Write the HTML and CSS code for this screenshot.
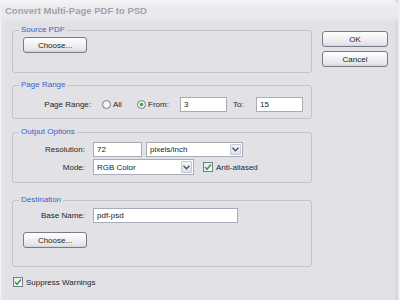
FILE: index.html
```html
<!DOCTYPE html>
<html>
<head>
<meta charset="utf-8">
<link rel="stylesheet" href="styles.css">
</head>
<body>
<div class="window">
  <div class="titlebar">Convert Multi-Page PDF to PSD</div>
  <div class="client">
    <div class="main">
      <fieldset class="group g-source">
        <legend>Source PDF</legend>
        <div class="btn choose">Choose...</div>
      </fieldset>

      <fieldset class="group g-range">
        <legend>Page Range</legend>
        <div class="row">
          <span class="lbl lbl-range">Page Range:</span>
          <span class="radio r-all"></span><span class="opt opt-all">All</span>
          <span class="radio on r-from"></span><span class="opt opt-from">From:</span>
          <span class="field f-num">3</span>
          <span class="opt opt-to">To:</span>
          <span class="field f-num">15</span>
        </div>
      </fieldset>

      <fieldset class="group g-output">
        <legend>Output Options</legend>
        <div class="row">
          <span class="lbl">Resolution:</span>
          <span class="field f-res">72</span>
          <span class="select s-units"><span class="sel-text">pixels/inch</span><span class="arrow"><svg width="7" height="5" viewBox="0 0 7 5"><path d="M0.5 0.8 L3.5 3.8 L6.5 0.8" fill="none" stroke="#4d5566" stroke-width="1.4"/></svg></span></span>
        </div>
        <div class="row row2">
          <span class="lbl">Mode:</span>
          <span class="select s-mode"><span class="sel-text">RGB Color</span><span class="arrow"><svg width="7" height="5" viewBox="0 0 7 5"><path d="M0.5 0.8 L3.5 3.8 L6.5 0.8" fill="none" stroke="#4d5566" stroke-width="1.4"/></svg></span></span>
          <span class="check c-anti"><svg width="8" height="8" viewBox="0 0 8 8"><path d="M1 4 L3 6.2 L7 1.5" fill="none" stroke="#2ea52e" stroke-width="1.6"/></svg></span>
          <span class="opt">Anti-aliased</span>
        </div>
      </fieldset>

      <fieldset class="group g-dest">
        <legend>Destination</legend>
        <div class="row">
          <span class="lbl">Base Name:</span>
          <span class="field f-name">pdf-psd</span>
        </div>
        <div class="btn choose choose2">Choose...</div>
      </fieldset>

      <div class="suppress">
        <span class="check"><svg width="8" height="8" viewBox="0 0 8 8"><path d="M1 4 L3 6.2 L7 1.5" fill="none" stroke="#2ea52e" stroke-width="1.6"/></svg></span>
        <span class="opt">Suppress Warnings</span>
      </div>
    </div>
    <div class="side">
      <div class="btn side-btn">OK</div>
      <div class="btn side-btn cancel">Cancel</div>
    </div>
  </div>
</div>
</body>
</html>
```
FILE: styles.css
```css
* { box-sizing: border-box; }
html, body { margin: 0; padding: 0; }
body {
  width: 400px;
  height: 300px;
  overflow: hidden;
  font-family: "Liberation Sans", Arial, sans-serif;
  font-size: 8px;
  color: #262626;
  background: #e0e0e5;
}
.window {
  width: 400px;
  height: 300px;
  background: #e1e1e6;
  border-left: 1px solid #f2f2f5;
  border-right: 2px solid #f0f0f3;
  box-shadow: inset 3px 0 0 #e6e6ea, inset -3px 0 0 #d8d8de;
}
.titlebar {
  height: 21px;
  line-height: 22px;
  padding-left: 4px;
  font-size: 9.5px;
  font-weight: bold;
  color: #a2a2aa;
  background: linear-gradient(#f4f4f7, #ebebef 40%, #e8e8ec);
  border-top-right-radius: 6px;
  border-bottom: 1px solid #e4e4e8;
}
.client {
  display: flex;
  padding-left: 11px;
}
.main {
  width: 300px;
}
.group {
  margin: 0;
  padding: 0;
  border: 1px solid #c3c3ca;
  border-radius: 3px;
  min-width: 0;
  width: 300px;
}
.group legend {
  margin-left: 6px;
  padding: 0 2px;
  font-size: 8px;
  line-height: 10px;
  color: #3b5fbf;
}
.g-source { margin-top: 4px; padding-bottom: 19px; }
.g-range { margin-top: 7px; padding-bottom: 6px; }
.g-output { margin-top: 8px; padding-bottom: 7px; }
.g-dest { margin-top: 12px; padding-bottom: 18px; }

.btn {
  height: 16px;
  border: 1px solid #7a7a8b;
  border-radius: 3px;
  background: linear-gradient(#ffffff, #f2f2f5 45%, #e4e4ea 85%, #d2d2da);
  display: flex;
  align-items: center;
  justify-content: center;
  font-size: 8px;
  color: #222;
}
.choose {
  width: 64px;
  margin: 2px 0 0 10px;
}
.choose2 { margin-top: 9px; }

.row {
  display: flex;
  align-items: center;
  height: 15px;
}
.g-range .row { margin-top: 7px; }
.g-output .row { margin-top: 5px; }
.g-output .row2 { margin-top: 2px; height: 16px; }
.g-dest .row { margin-top: 3px; }

.lbl {
  width: 72px;
  text-align: right;
  margin-right: 8px;
}
.lbl-range { width: 78px; margin-right: 11px; }

.radio {
  width: 9px;
  height: 9px;
  border-radius: 50%;
  border: 1px solid #6f7d95;
  background: radial-gradient(circle at 60% 65%, #ffffff, #e8e8ee);
  flex: none;
  position: relative;
}
.radio.on::after {
  content: "";
  position: absolute;
  left: 2px;
  top: 2px;
  width: 3px;
  height: 3px;
  border-radius: 50%;
  background: #35ad35;
  box-shadow: 0 0 0 0.5px #6acb6a;
}
.opt { white-space: nowrap; }
.opt-all { margin-left: 2px; width: 24px; }
.opt-from { margin-left: 2px; width: 32px; }
.opt-to { margin-left: 6px; width: 23px; }

.field {
  height: 15px;
  background: #fff;
  border: 1px solid #a7adb7;
  padding-left: 3px;
  display: flex;
  align-items: center;
  color: #222;
}
.f-num { width: 47px; }
.f-res { width: 49px; }
.f-name { width: 145px; }

.select {
  height: 15px;
  background: #fff;
  border: 1px solid #a7adb7;
  display: flex;
  align-items: stretch;
  color: #222;
}
.sel-text {
  flex: 1;
  padding-left: 3px;
  display: flex;
  align-items: center;
}
.arrow {
  width: 11px;
  margin: 1px;
  border: 1px solid #c2c8d4;
  border-radius: 1px;
  background: linear-gradient(#f4f5f8, #dfe2ea);
  display: flex;
  align-items: center;
  justify-content: center;
}
.s-units { width: 97px; margin-left: 4px; }
.s-mode { width: 101px; height: 16px; }

.check {
  width: 10px;
  height: 10px;
  border: 1px solid #6f7d95;
  background: linear-gradient(135deg, #e6e6ec, #ffffff);
  display: flex;
  align-items: center;
  justify-content: center;
  flex: none;
}
.c-anti { margin-left: 9px; margin-right: 3px; }

.suppress {
  display: flex;
  align-items: center;
  margin-top: 10px;
  margin-left: 1px;
}
.suppress .check { margin-right: 3px; }

.side {
  margin-left: 10px;
  padding-top: 10px;
}
.side-btn { width: 66px; }
.cancel { margin-top: 4px; }
```
